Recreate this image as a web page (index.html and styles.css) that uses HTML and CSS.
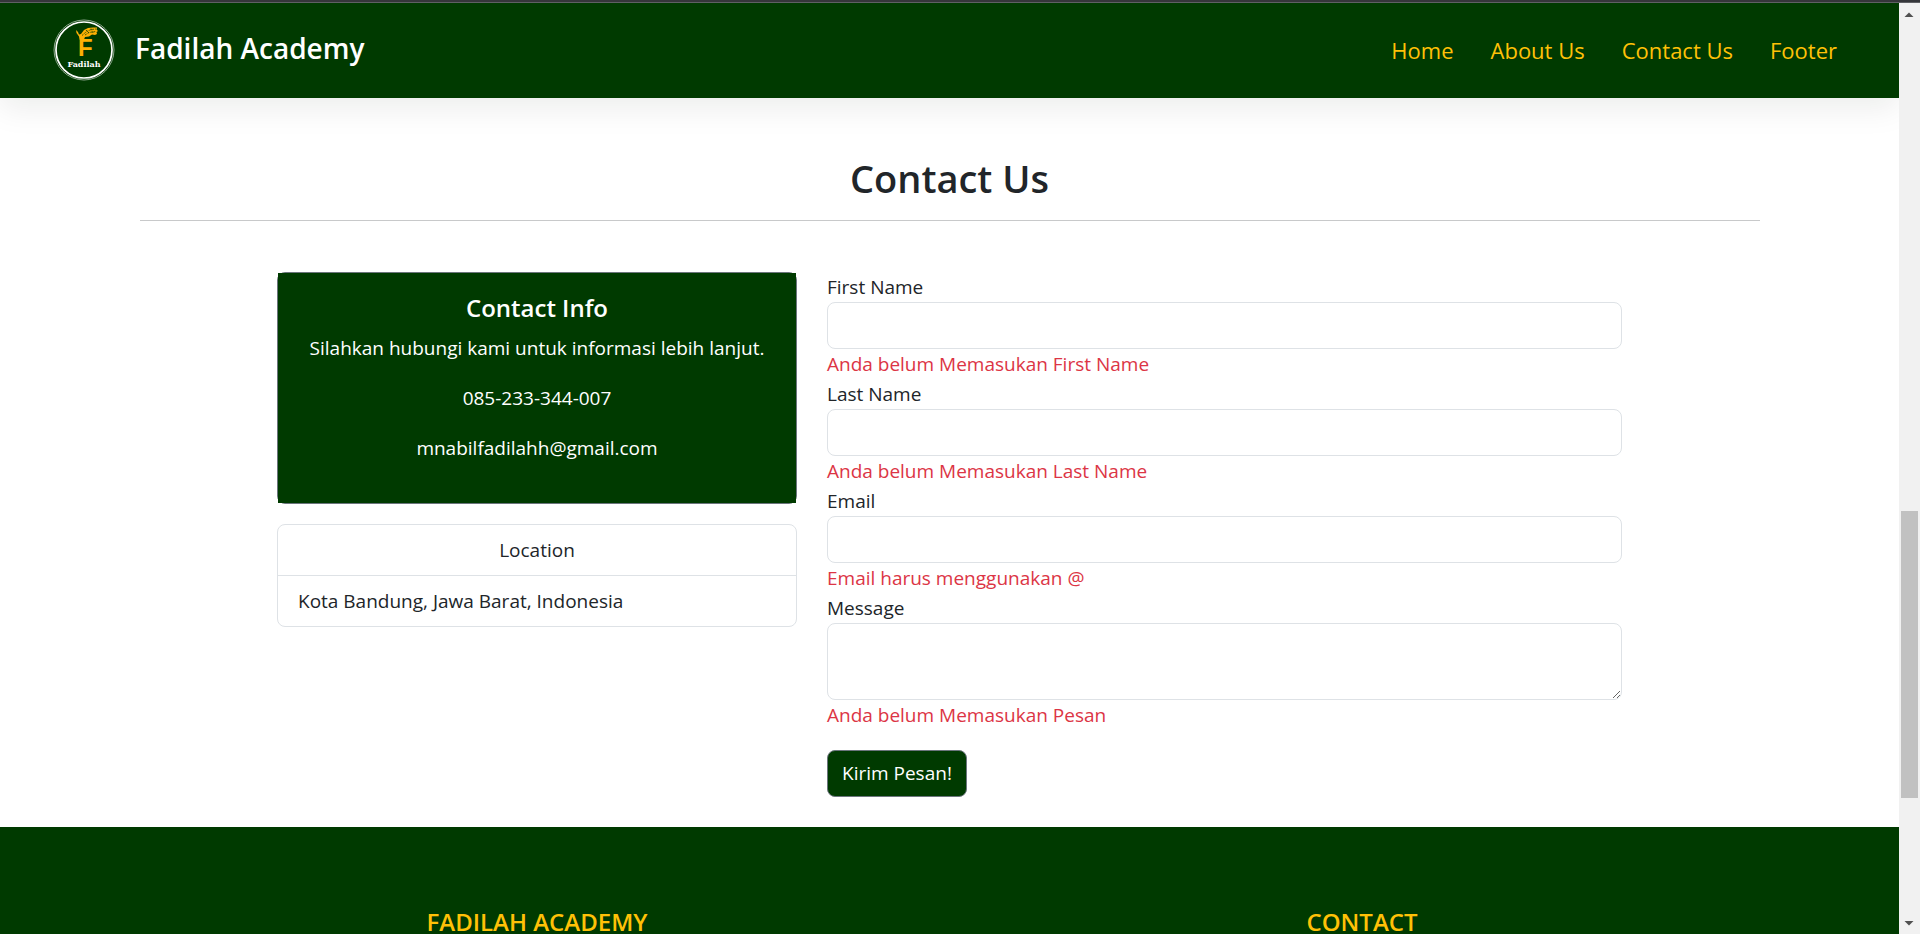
FILE: index.html
```html
<!DOCTYPE html>
<html lang="id">
<head>
<meta charset="utf-8">
<meta name="viewport" content="width=device-width, initial-scale=1">
<title>Fadilah Academy</title>
<link rel="stylesheet" href="styles.css">
</head>
<body>
<div class="window-edge"></div>
<div class="viewport">
  <div class="page">
    <header class="navbar">
      <a class="brand" href="#home">
        <svg class="logo" viewBox="0 0 62 62" role="img" aria-label="Logo Fadilah">
          <circle cx="31" cy="31" r="30" fill="none" stroke="#8fa88f" stroke-width="1"/>
          <circle cx="31" cy="31" r="28" fill="none" stroke="#fff" stroke-width="1.7"/>
          <text class="logo-initial" x="25" y="37">F</text>
          <path fill="#fdb004" d="M26.500 20.500 26 17.500 23.500 14 23 11 25 13 26 15.500 28 15 31 11 35 9 40 8.500 44 8.500 43.500 10.500 45 12 43.500 13 44 15 42 16 39 15.500 36 17.500 32 18 31 20.500Z"/>
          <path stroke="#003a00" stroke-width="0.7" stroke-dasharray="2 1" fill="none" d="M29 16.500 33 13 38 10.500 43 10M32 16 36 13.500 43 12.500M33 11 36 14M38 9.500 40 14"/>
          <text class="logo-name" x="31" y="48">Fadilah</text>
        </svg>
        <span class="brand-name">Fadilah Academy</span>
      </a>
      <nav class="nav">
        <a href="#home">Home</a>
        <a href="#about">About Us</a>
        <a href="#contact">Contact Us</a>
        <a href="#footer">Footer</a>
      </nav>
    </header>

    <main class="contact" id="contact">
      <h2 class="title">Contact Us</h2>
      <div class="columns">
        <div class="side">
          <section class="card card-dark">
            <div class="card-body">
              <h3 class="card-title">Contact Info</h3>
              <p>Silahkan hubungi kami untuk informasi lebih lanjut.</p>
              <p>085-233-344-007</p>
              <p>mnabilfadilahh@gmail.com</p>
            </div>
          </section>
          <ul class="card list">
            <li class="list-head">Location</li>
            <li>Kota Bandung, Jawa Barat, Indonesia</li>
          </ul>
        </div>
        <form class="form">
          <label for="first">First Name</label>
          <input id="first" type="text">
          <span class="error">Anda belum Memasukan First Name</span>
          <label for="last">Last Name</label>
          <input id="last" type="text">
          <span class="error">Anda belum Memasukan Last Name</span>
          <label for="email">Email</label>
          <input id="email" type="text">
          <span class="error">Email harus menggunakan @</span>
          <label for="message">Message</label>
          <textarea id="message"></textarea>
          <span class="error">Anda belum Memasukan Pesan</span>
          <button class="submit" type="button">Kirim Pesan!</button>
        </form>
      </div>
    </main>

    <footer class="footer" id="footer">
      <div class="footer-columns">
        <h4>FADILAH ACADEMY</h4>
        <h4>CONTACT</h4>
      </div>
    </footer>
  </div>

  <div class="scrollbar" aria-hidden="true">
    <svg class="arrow" viewBox="0 0 21 21"><path fill="#505050" d="M5.500 14 10 9.500 14.500 14Z"/></svg>
    <div class="track-before"></div>
    <div class="thumb"></div>
    <div class="track-after"></div>
    <svg class="arrow" viewBox="0 0 21 21"><path fill="#505050" d="M5.500 8 10 12.500 14.500 8Z"/></svg>
  </div>
</div>
</body>
</html>
```
FILE: styles.css
```css
* {
  box-sizing: border-box;
}

body {
  margin: 0;
  height: 100vh;
  display: flex;
  flex-direction: column;
  overflow: hidden;
  background: #fff;
  color: #212529;
  font-family: "Open Sans", "Noto Sans", sans-serif;
  font-size: 19px;
  line-height: 30px;
}

h2, h3, h4, p, ul {
  margin: 0;
  padding: 0;
}

.window-edge {
  flex: none;
  height: 3px;
  background: #35363a;
  border-bottom: 1px solid #5f6064;
}

.viewport {
  flex: 1;
  min-height: 0;
  display: flex;
}

.page {
  flex: 1;
  min-width: 0;
  display: flex;
  flex-direction: column;
  overflow: hidden;
}

/* Header */
.navbar {
  position: relative;
  z-index: 1;
  flex: none;
  display: flex;
  align-items: center;
  justify-content: space-between;
  height: 95px;
  padding: 0 62px 2px 53px;
  background: #003a00;
  box-shadow: 0 10px 30px rgba(0, 30, 0, 0.08);
}

.brand {
  display: flex;
  align-items: center;
  gap: 20px;
  color: #fff;
  text-decoration: none;
}

.logo {
  display: block;
  width: 62px;
  height: 62px;
}

.logo-initial {
  fill: #fdb004;
  font-family: "Liberation Sans", sans-serif;
  font-size: 24px;
  font-weight: 700;
}

.logo-name {
  fill: #fff;
  font-family: "DejaVu Serif", serif;
  font-size: 8px;
  font-weight: 700;
  text-anchor: middle;
}

.brand-name {
  font-size: 28px;
  font-weight: 600;
  line-height: 42px;
  padding-bottom: 4px;
}

.nav {
  display: flex;
  gap: 37px;
}

.nav a {
  color: #ffc107;
  font-size: 22px;
  text-decoration: none;
}

/* Contact section */
.contact {
  flex: none;
  width: 100%;
  max-width: 1650px;
  margin: 0 auto;
  padding: 56px 15px 30px;
}

.title {
  padding-bottom: 18px;
  margin-bottom: 51px;
  border-bottom: 1px solid #c8c9ca;
  font-size: 38px;
  font-weight: 600;
  line-height: 48px;
  text-align: center;
}

.columns {
  display: grid;
  grid-template-columns: 520fr 795fr;
  gap: 30px;
  max-width: 1345px;
  margin: 0 auto;
}

.side {
  display: flex;
  flex-direction: column;
  gap: 20px;
}

.card {
  border: 1px solid #dee2e6;
  border-radius: 8px;
}

.card-dark {
  border-color: #6c757d;
  color: #fff;
  text-align: center;
}

.card-body {
  display: flex;
  flex-direction: column;
  gap: 20px;
  padding: 20px 20px 40px;
  background: #003a00;
}

.card-title {
  margin-bottom: -10px;
  font-size: 24px;
  font-weight: 600;
}

.list {
  list-style: none;
}

.list li {
  padding: 10px 20px;
}

.list .list-head {
  border-bottom: 1px solid #dee2e6;
  text-align: center;
}

/* Form */
.form {
  display: flex;
  flex-direction: column;
}

.form input,
.form textarea {
  width: 100%;
  height: 47px;
  padding: 7px 15px;
  border: 1px solid #dee2e6;
  border-radius: 8px;
  background: #fff;
  color: inherit;
  font: inherit;
}

.form textarea {
  height: 77px;
  resize: vertical;
}

.error {
  color: #dc3545;
}

.submit {
  align-self: flex-start;
  margin-top: 20px;
  padding: 8px 14px;
  border: 1px solid #6c757d;
  border-radius: 8px;
  background: #003a00;
  color: #fff;
  font: inherit;
  line-height: 29px;
}

/* Footer */
.footer {
  flex: 1 0 auto;
  padding-top: 83px;
  background: #003a00;
  color: #ffc107;
}

.footer-columns {
  display: grid;
  grid-template-columns: 1fr 1fr;
  max-width: 1650px;
  margin: 0 auto;
  text-align: center;
}

.footer h4 {
  font-size: 24px;
  font-weight: 600;
  line-height: 24px;
}

/* Scrollbar */
.scrollbar {
  flex: none;
  display: flex;
  flex-direction: column;
  width: 21px;
  padding: 0 2px;
  background: #f1f1f1;
}

.arrow {
  flex: none;
  width: 21px;
  height: 21px;
  margin: 0 -2px;
}

.track-before {
  flex: 487;
}

.thumb {
  flex: 287;
  background: #c1c1c1;
}

.track-after {
  flex: 115;
}
```
